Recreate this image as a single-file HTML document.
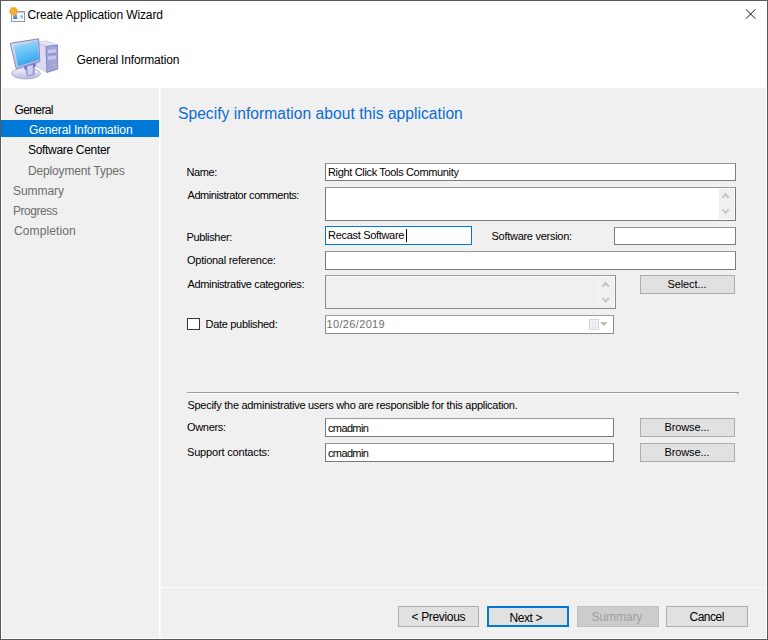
<!DOCTYPE html>
<html><head><meta charset="utf-8">
<style>
html,body{margin:0;padding:0;}
body{width:768px;height:640px;overflow:hidden;position:relative;background:#f0f0f0;font-family:"Liberation Sans",sans-serif;}
.a{position:absolute;}
.t{position:absolute;white-space:nowrap;line-height:1;}
.s12{font-size:12px;}
.s11{font-size:11px;letter-spacing:-0.35px;}
.tb{position:absolute;background:#fff;border:1px solid #7a7a7a;border-top-color:#979797;box-sizing:border-box;}
.chev{position:absolute;}
.btn{position:absolute;background:#e1e1e1;border:1px solid #adadad;box-sizing:border-box;}
</style></head><body>
<!-- window frame -->
<div class="a" style="left:0;top:0;width:768px;height:640px;box-sizing:border-box;border:1px solid #595959;"></div>
<div class="a" style="left:1px;top:88px;width:1px;height:551px;background:#fff;"></div>
<div class="a" style="left:766px;top:88px;width:1px;height:551px;background:#fff;"></div>
<div class="a" style="left:1px;top:638px;width:766px;height:1px;background:#fff;"></div>
<!-- header white -->
<div class="a" style="left:1px;top:1px;width:766px;height:87px;background:#fff;"></div>
<!-- title icon -->
<svg class="a" style="left:0;top:0" width="30" height="30" viewBox="0 0 30 30">
<defs><linearGradient id="tib" x1="0" y1="0" x2="0" y2="1"><stop offset="0" stop-color="#7ab4ea"/><stop offset="1" stop-color="#3a76d0"/></linearGradient>
<radialGradient id="sun" cx="0.5" cy="0.5" r="0.5"><stop offset="0" stop-color="#f8b838"/><stop offset="1" stop-color="#f0a020"/></radialGradient></defs>
<rect x="11.5" y="11.5" width="13" height="10" fill="#fdfdff" stroke="#9698a8" stroke-width="1"/>
<rect x="12" y="12" width="12" height="1.2" fill="#c4cce0"/>
<rect x="13.2" y="14.5" width="4" height="4.5" fill="url(#tib)"/>
<rect x="19" y="14.5" width="2" height="4.5" fill="#e0eef8"/>
<rect x="21.3" y="15.2" width="1.4" height="3" fill="#7080d8"/>
<polygon points="13.60,6.40 14.53,7.82 16.05,7.06 16.15,8.75 17.84,8.85 17.08,10.37 18.50,11.30 17.08,12.23 17.84,13.75 16.15,13.85 16.05,15.54 14.53,14.78 13.60,16.20 12.67,14.78 11.15,15.54 11.05,13.85 9.36,13.75 10.12,12.23 8.70,11.30 10.12,10.37 9.36,8.85 11.05,8.75 11.15,7.06 12.67,7.82" fill="url(#sun)"/>
</svg>
<!-- computer icon -->
<svg class="a" style="left:0;top:30px" width="70" height="58" viewBox="0 30 70 58">
<defs>
<linearGradient id="scr" x1="0" y1="0" x2="0.3" y2="1"><stop offset="0" stop-color="#9edcfa"/><stop offset="0.55" stop-color="#64c2f4"/><stop offset="1" stop-color="#34a2ee"/></linearGradient>
<linearGradient id="bz" x1="0" y1="0" x2="1" y2="1"><stop offset="0" stop-color="#dcdff0"/><stop offset="1" stop-color="#a8acd8"/></linearGradient>
<linearGradient id="base" x1="0" y1="0" x2="0" y2="1"><stop offset="0" stop-color="#f4f4fa"/><stop offset="1" stop-color="#b8bade"/></linearGradient>
</defs>
<!-- tower -->
<polygon points="35,42.5 46.5,41 57.5,45 46,46.5" fill="#e4e4f2" stroke="#b4b6da" stroke-width="0.6"/>
<polygon points="35,42.5 46,46.5 47,72.5 35.5,66" fill="#dadaf0" stroke="#b0b2d8" stroke-width="0.6"/>
<polygon points="46,46.5 57.5,45 57.8,69 47,72.5" fill="#a2a4dc" stroke="#6e70bc" stroke-width="0.7"/>
<polygon points="48,50 56,49 56,52.5 48,53.5" fill="#c4c6ec"/><polygon points="48,54 56,53 56,54 48,55" fill="#8a8cd0"/>
<polygon points="48,56.5 56,55.5 56,59 48,60" fill="#c4c6ec"/>
<rect x="53.5" y="63.5" width="1.5" height="2" fill="#c8d860"/>
<!-- base -->
<ellipse cx="26" cy="73.5" rx="14.5" ry="5.5" fill="url(#base)" stroke="#a4a6d8" stroke-width="0.8"/>
<polygon points="24,63 35,60.5 34.5,75 27,77" fill="#9a9cdc"/><polygon points="23,65.5 36,62 35.5,67 25,70" fill="#7476cc"/>
<polygon points="27,66 33,65 32.5,74 28,75.5" fill="#cfd0ee"/>
<!-- monitor -->
<polygon points="10.2,43.3 38.6,38.8 39.8,61.5 16.2,68.6" fill="url(#bz)" stroke="#8486c4" stroke-width="1"/>
<polygon points="13.9,46 37.2,41.6 38.9,59.6 18.1,66.3" fill="url(#scr)"/>
</svg>
<!-- title -->
<div id="title" class="t s12" style="left:27.5px;top:9px;color:#000;letter-spacing:-0.108px;">Create Application Wizard</div>
<!-- close X -->
<svg class="a" style="left:740px;top:4px" width="20" height="20" viewBox="0 0 20 20"><path d="M6 5.4 L15.3 14.7 M15.3 5.4 L6 14.7" stroke="#111" stroke-width="1"/></svg>
<!-- header text -->
<div id="hdr" class="t s12" style="left:76.5px;top:54px;color:#000;letter-spacing:-0.178px;">General Information</div>

<!-- nav -->
<div class="a" style="left:159px;top:88px;width:1px;height:551px;background:#fff;"></div>
<div class="a" style="left:160px;top:88px;width:1px;height:551px;background:#f8f8f8;"></div>
<div class="a" style="left:1px;top:120px;width:158px;height:17px;background:#0078d7;"></div>
<div id="nGen" class="t s12" style="left:14.5px;top:104px;color:#000;letter-spacing:-0.617px;">General</div>
<div id="nGI" class="t s12" style="left:29px;top:124px;color:#fff;letter-spacing:-0.139px;">General Information</div>
<div id="nSC" class="t s12" style="left:28px;top:144px;color:#000;letter-spacing:-0.314px;">Software Center</div>
<div id="nDT" class="t s12" style="left:28px;top:165px;color:#6d6d6d;letter-spacing:-0.153px;">Deployment Types</div>
<div id="nSum" class="t s12" style="left:13px;top:185px;color:#6d6d6d;letter-spacing:-0.067px;">Summary</div>
<div id="nProg" class="t s12" style="left:13px;top:205px;color:#6d6d6d;letter-spacing:-0.457px;">Progress</div>
<div id="nComp" class="t s12" style="left:14px;top:225px;color:#6d6d6d;letter-spacing:0.100px;">Completion</div>

<!-- content title -->
<div id="spec" class="t" style="left:178px;top:106px;font-size:15.6px;color:#0a6cd4;letter-spacing:0.032px;">Specify information about this application</div>

<!-- form -->
<div id="lName" class="t s11" style="left:186.5px;top:167px;letter-spacing:-0.400px;">Name:</div>
<div class="tb" style="left:325px;top:163px;width:411px;height:18px;"></div>
<div id="vName" class="t s11" style="left:328px;top:167px;letter-spacing:-0.342px;">Right Click Tools Community</div>

<div id="lAdm" class="t s11" style="left:187.5px;top:190px;letter-spacing:-0.445px;">Administrator comments:</div>
<div class="tb" style="left:325px;top:187px;width:411px;height:34px;"></div>
<div class="a" style="left:719px;top:189px;width:15px;height:30px;background:#f0f0f0;"></div>
<svg class="a" style="left:719px;top:189px" width="15" height="30" viewBox="0 0 15 30"><path d="M3.4 8.8 L6.5 5.2 L9.6 8.8 M3.4 20.3 L6.5 23.9 L9.6 20.3" fill="none" stroke="#c4c4c4" stroke-width="1.9"/></svg>

<div id="lPub" class="t s11" style="left:186.5px;top:232px;letter-spacing:-0.350px;">Publisher:</div>
<div class="tb" style="left:325px;top:226px;width:147px;height:19px;border-color:#0078d7;"></div>
<div class="a" style="left:406px;top:229px;width:1px;height:13px;background:#000;"></div>
<div id="vPub" class="t s11" style="left:328px;top:230px;letter-spacing:-0.307px;">Recast Software</div>

<div id="lSV" class="t s11" style="left:491.5px;top:231px;letter-spacing:-0.275px;">Software version:</div>
<div class="tb" style="left:614px;top:227px;width:122px;height:18px;"></div>

<div id="lOpt" class="t s11" style="left:187px;top:255px;letter-spacing:-0.261px;">Optional reference:</div>
<div class="tb" style="left:325px;top:251px;width:411px;height:19px;"></div>

<div id="lCat" class="t s11" style="left:187.5px;top:279px;letter-spacing:-0.358px;">Administrative categories:</div>
<div class="tb" style="left:325px;top:275px;width:291px;height:34px;background:#f0f0f0;border-color:#8c8c8c;border-top-color:#9c9c9c;"></div>
<div class="a" style="left:326px;top:276px;width:289px;height:1px;background:#fafafa;"></div>
<div class="a" style="left:614px;top:276px;width:1px;height:32px;background:#fafafa;"></div>
<div class="a" style="left:598px;top:276px;width:1px;height:32px;background:#f6f6f6;"></div>
<svg class="a" style="left:599px;top:277px" width="15" height="30" viewBox="0 0 15 30"><path d="M3.4 9.6 L6.6 6 L9.8 9.6 M3.4 20.8 L6.6 24.6 L9.8 20.8" fill="none" stroke="#c4c4c4" stroke-width="1.9"/></svg>
<div class="btn" style="left:640px;top:275px;width:95px;height:19px;"></div>
<div id="bSel" class="t s11" style="left:667.5px;top:279px;letter-spacing:-0.100px;">Select...</div>

<div class="a" style="left:187px;top:318px;width:13px;height:12px;box-sizing:border-box;border:1px solid #333;background:#fff;"></div>
<div id="lDate" class="t s11" style="left:205.5px;top:319px;letter-spacing:-0.300px;">Date published:</div>
<div class="tb" style="left:325px;top:315px;width:289px;height:19px;border-color:#8c8c8c;border-top-color:#9c9c9c;"></div>
<svg class="a" style="left:586px;top:317px" width="24" height="15" viewBox="0 0 24 15"><rect x="3.5" y="2.5" width="9" height="10" fill="#f6f7f9" stroke="#d4d6d8" stroke-width="1"/><path d="M4 5.5 H12 M4 8 H12 M4 10.5 H12 M6.5 3 V12.5 M9 3 V12.5" stroke="#e2e5ea" stroke-width="0.8"/><path d="M14 5.2 H21.5 L17.75 8.8 Z" fill="#b4b8a4"/></svg>
<div id="vDate" class="t s11" style="left:326.5px;top:319px;color:#6d6d6d;letter-spacing:0.350px;">10/26/2019</div>

<div class="a" style="left:187px;top:392px;width:552px;height:1px;background:#9c9c9c;"></div>
<div class="a" style="left:187px;top:393px;width:550px;height:1px;background:#fff;"></div>
<div class="a" style="left:737px;top:393px;width:1px;height:1px;background:#a0a0a0;"></div>
<div id="lSpec" class="t s11" style="left:187.5px;top:400px;letter-spacing:-0.292px;">Specify the administrative users who are responsible for this application.</div>

<div id="lOwn" class="t s11" style="left:187px;top:422px;letter-spacing:-0.317px;">Owners:</div>
<div class="tb" style="left:325px;top:418px;width:289px;height:19px;"></div>
<div id="vOwn" class="t s11" style="left:328px;top:423px;letter-spacing:-0.633px;">cmadmin</div>
<div class="btn" style="left:640px;top:418px;width:95px;height:19px;"></div>
<div id="bBr1" class="t s11" style="left:664.5px;top:422px;letter-spacing:-0.113px;">Browse...</div>

<div id="lSup" class="t s11" style="left:187px;top:447px;letter-spacing:-0.169px;">Support contacts:</div>
<div class="tb" style="left:325px;top:443px;width:289px;height:19px;"></div>
<div id="vSup" class="t s11" style="left:328px;top:448px;letter-spacing:-0.633px;">cmadmin</div>
<div class="btn" style="left:640px;top:443px;width:95px;height:19px;"></div>
<div id="bBr2" class="t s11" style="left:664.5px;top:447px;letter-spacing:-0.113px;">Browse...</div>

<!-- bottom -->
<div class="a" style="left:161px;top:587px;width:605px;height:1px;background:#fbfbfb;"></div>
<div class="btn" style="left:398px;top:606px;width:81px;height:21px;"></div>
<div id="bPrev" class="t s12" style="left:411.5px;top:611px;letter-spacing:-0.333px;">&lt; Previous</div>
<div class="btn" style="left:487px;top:606px;width:82px;height:21px;border:2px solid #0078d7;"></div>
<div id="bNext" class="t s12" style="left:509.5px;top:612px;letter-spacing:-0.420px;">Next &gt;</div>
<div class="btn" style="left:577px;top:606px;width:82px;height:21px;background:#cccccc;border-color:#bfbfbf;"></div>
<div id="bSum" class="t s12" style="left:591.5px;top:611px;color:#a0a0a0;letter-spacing:-0.083px;">Summary</div>
<div class="btn" style="left:666px;top:606px;width:82px;height:21px;"></div>
<div id="bCan" class="t s12" style="left:689.5px;top:611px;letter-spacing:-0.500px;">Cancel</div>
</body></html>
